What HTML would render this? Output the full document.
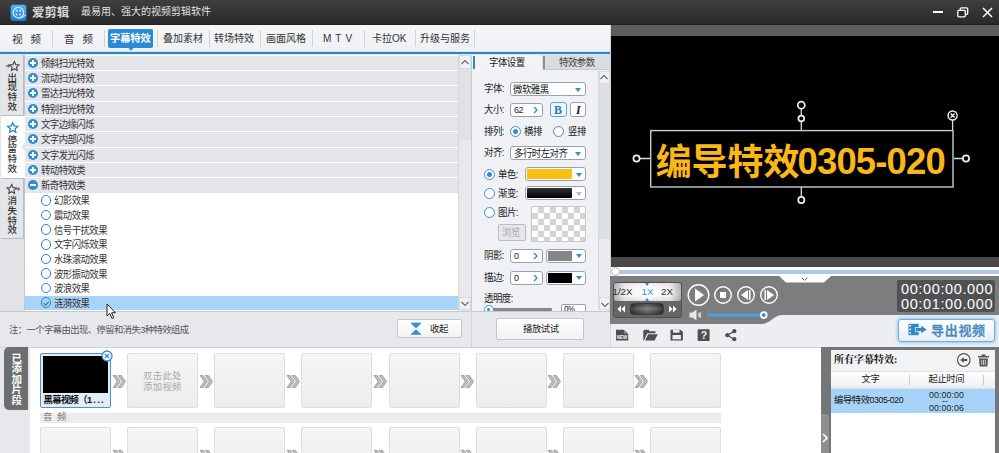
<!DOCTYPE html>
<html lang="zh-CN">
<head>
<meta charset="utf-8">
<title>爱剪辑</title>
<style>
*{box-sizing:border-box;margin:0;padding:0}
html,body{width:999px;height:453px;overflow:hidden;background:#eceef1}
body{font-family:"Liberation Sans","Noto Sans CJK SC",sans-serif;font-size:11px;color:#333;position:relative}
.a{position:absolute}
.t{position:absolute;white-space:nowrap;line-height:1}
/* title bar */
#title{left:0;top:0;width:999px;height:25px;background:linear-gradient(#3f3f3f,#333 50%,#2b2b2b 94%,#1c1c1c)}
/* menu */
#menu{left:0;top:25px;width:610px;height:27px;background:linear-gradient(#f4f6f8,#eef0f3)}
.mi{position:absolute;top:33px;font-size:10.5px;line-height:12px;color:#333;white-space:nowrap}
.sep{position:absolute;top:30px;width:1px;height:17px;background:#d0d3d7}
/* rows */
.g{position:absolute;left:25px;width:433px;height:14.33px;background:#e3e5e9}
.g span,.c span{position:absolute;left:16px;top:2px;font-size:9.4px;letter-spacing:-0.55px;line-height:11px;transform:scaleY(1.06);transform-origin:50% 50%;color:#333;white-space:nowrap}
.g i{position:absolute;left:3px;top:2px;width:10px;height:10px;border-radius:50%;background:#2e8fd0}
.g i:before{content:"";position:absolute;left:2px;top:4px;width:6px;height:2px;background:#fff}
.g i.p:after{content:"";position:absolute;left:4px;top:2px;width:2px;height:6px;background:#fff}
.c{position:absolute;left:25px;width:433px;height:14.62px}
.c span{left:29px}
.c i{position:absolute;left:15.700px;top:1.800px;width:10.600px;height:10.600px;border-radius:50%;border:1.500px solid #2f84c2;background:#fff}
/* form */
.lb{position:absolute;font-size:9.4px;letter-spacing:-0.5px;line-height:12px;transform:scaleY(1.08);transform-origin:50% 50%;color:#222;white-space:nowrap}
.in{position:absolute;background:#fff;border:1px solid #9aa3ad;border-radius:3px}
.rd{position:absolute;width:11px;height:11px;border-radius:50%;border:1px solid #3f8fc9;background:#fff}
.rd.on:after{content:"";position:absolute;left:2px;top:2px;width:5px;height:5px;border-radius:50%;background:#2e8fd0}
.dd{position:absolute;width:0;height:0;margin:0.5px 0 0 0.5px;border-left:3.5px solid transparent;border-right:3.5px solid transparent;border-top:4px solid #2e8fd0}
/* clips */
.clip{position:absolute;width:71px;height:55px;background:linear-gradient(#f5f5f5,#ededed);border:1px solid #dedede;border-radius:2px}
.arr{position:absolute;font-size:0}
</style>
</head>
<body>
<!-- TITLE -->
<div id="title" class="a"></div>
<svg class="a" style="left:10px;top:4px" width="17" height="17" viewBox="0 0 17 17">
 <defs><linearGradient id="lg" x1="0" y1="0" x2="0" y2="1"><stop offset="0" stop-color="#5db4f0"/><stop offset="1" stop-color="#1e7fd0"/></linearGradient></defs>
 <rect x="0.400" y="0.400" width="16.200" height="16.700" rx="3.300" fill="url(#lg)" stroke="#1c5f9c" stroke-width="0.800"/>
 <circle cx="8.400" cy="8.600" r="5.300" fill="none" stroke="#cfeaff" stroke-width="1.300"/>
 <circle cx="6.600" cy="6.800" r="1.050" fill="#cfeaff"/><circle cx="10.200" cy="6.800" r="1.050" fill="#cfeaff"/>
 <circle cx="6.600" cy="10.500" r="1.050" fill="#cfeaff"/><circle cx="10.200" cy="10.500" r="1.050" fill="#cfeaff"/>
 <path d="M8.400 13.900 Q13 14.200 15.800 10.500" fill="none" stroke="#cfeaff" stroke-width="1.200"/>
</svg>
<div class="t" style="left:32px;top:6.500px;font-size:12.400px;font-weight:bold;color:#d6d6d6;letter-spacing:0px">爱剪辑</div>
<div class="t" style="left:81px;top:7px;font-size:10px;color:#e0e0e0">最易用、强大的视频剪辑软件</div>
<!-- window buttons -->
<div class="a" style="left:933px;top:11px;width:10px;height:2px;background:#fff"></div>
<svg class="a" style="left:957px;top:7px" width="12" height="11" viewBox="0 0 12 11"><rect x="3.2" y="0.8" width="7.5" height="6.5" rx="1" fill="none" stroke="#fff" stroke-width="1.3"/><rect x="0.8" y="3.3" width="7.5" height="6.5" rx="1" fill="#2a2a2a" stroke="#fff" stroke-width="1.3"/></svg>
<svg class="a" style="left:982px;top:7px" width="11" height="11" viewBox="0 0 11 11"><path d="M1 1 L10 10 M10 1 L1 10" stroke="#fff" stroke-width="1.5"/></svg>

<!-- MENU -->
<div id="menu" class="a"></div>
<div class="a" style="left:0;top:51px;width:610px;height:1px;background:#cfe6f6"></div>
<div class="a" style="left:0;top:52px;width:610px;height:2px;background:#2b86c2"></div>
<div class="a" style="left:0;top:54px;width:610px;height:1px;background:#d9ebf7"></div>
<div class="a" style="left:108px;top:29px;width:45px;height:19px;background:#2a8ad8;border-radius:2px"></div>
<div class="a" style="left:128px;top:47px;width:0;height:0;border-left:3px solid transparent;border-right:3px solid transparent;border-top:4px solid #2a8ad8"></div>
<div class="mi" style="left:12px;word-spacing:0">视<span style="display:inline-block;width:8px"></span>频</div>
<div class="sep" style="left:52px"></div>
<div class="mi" style="left:64px">音<span style="display:inline-block;width:8px"></span>频</div>
<div class="sep" style="left:104px"></div>
<div class="mi" style="left:110px;color:#fff;font-weight:bold;font-size:10.2px;top:33px">字幕特效</div>
<div class="sep" style="left:157px"></div>
<div class="mi" style="left:163px;font-size:10px">叠加素材</div>
<div class="sep" style="left:209px"></div>
<div class="mi" style="left:214px;font-size:10px">转场特效</div>
<div class="sep" style="left:260px"></div>
<div class="mi" style="left:266px;font-size:10px">画面风格</div>
<div class="sep" style="left:312px"></div>
<div class="mi" style="left:323px;font-size:10px;letter-spacing:4px">MTV</div>
<div class="sep" style="left:364px"></div>
<div class="mi" style="left:372px;font-size:10px">卡拉OK</div>
<div class="sep" style="left:415px"></div>
<div class="mi" style="left:420px;font-size:10px">升级与服务</div>
<div class="sep" style="left:474px"></div>

<!-- SIDEBAR -->
<div class="a" style="left:0;top:55px;width:25px;height:256px;background:#e1e3e6;border-right:1px solid #c4c7cb"></div>
<div class="a" style="left:1px;top:55px;width:23px;height:61px;background:#e4e6e9;border-right:1px solid #b9bcc1;border-bottom:1px solid #b9bcc1"></div>
<div class="a" style="left:1px;top:116px;width:24px;height:62px;background:#fff"></div>
<div class="a" style="left:1px;top:178px;width:23px;height:61px;background:#e4e6e9;border-right:1px solid #b9bcc1;border-bottom:1px solid #b9bcc1;border-top:1px solid #b9bcc1"></div>
<div class="t" style="left:7.5px;top:72.500px;font-size:9.5px;line-height:9.8px;width:9.5px;white-space:normal;color:#333;font-weight:500;word-break:break-all">出现特效</div>
<div class="t" style="left:7.5px;top:134.500px;font-size:9.5px;line-height:9.8px;width:9.5px;white-space:normal;color:#333;font-weight:500;word-break:break-all">停留特效</div>
<div class="t" style="left:7.5px;top:196px;font-size:9.5px;line-height:9.8px;width:9.5px;white-space:normal;color:#333;font-weight:500;word-break:break-all">消失特效</div>
<svg class="a" style="left:5px;top:60px" width="15" height="14" viewBox="0 0 15 14"><path d="M9.300 1.500 L10.700 4.500 L14.000 4.900 L11.500 7.100 L12.200 10.400 L9.300 8.700 L6.400 10.400 L7.100 7.100 L4.600 4.900 L7.900 4.500 Z" fill="none" stroke="#444" stroke-width="1.100"/><path d="M0.800 6 H4.300 M2.800 4.500 L4.500 6 L2.800 7.500" fill="none" stroke="#444" stroke-width="1"/></svg>
<svg class="a" style="left:5px;top:121px" width="15" height="14" viewBox="0 0 15 14"><path d="M7.700 1.700 L9.200 5.000 L12.700 5.400 L10.100 7.800 L10.800 11.300 L7.700 9.500 L4.600 11.300 L5.300 7.800 L2.700 5.400 L6.200 5.000 Z" fill="none" stroke="#2a86c4" stroke-width="1.300"/></svg>
<svg class="a" style="left:5px;top:183px" width="16" height="14" viewBox="0 0 16 14"><path d="M6.700 1.500 L8.100 4.500 L11.400 4.900 L8.900 7.100 L9.600 10.400 L6.700 8.700 L3.800 10.400 L4.500 7.100 L2.000 4.900 L5.300 4.500 Z" fill="none" stroke="#444" stroke-width="1.100"/><path d="M10.900 6 H14.400 M12.900 4.500 L14.600 6 L12.900 7.500" fill="none" stroke="#444" stroke-width="1"/></svg>
<div class="a" style="left:21px;top:143px;width:0;height:0;border-top:4px solid transparent;border-bottom:4px solid transparent;border-right:4px solid #e1e3e6"></div>

<!-- LIST -->
<div class="a" style="left:25px;top:55px;width:433px;height:256px;background:#fff"></div>
<div class="g" style="top:55.5px"><i class="p"></i><span>倾斜扫光特效</span></div>
<div class="g" style="top:70.8px"><i class="p"></i><span>流动扫光特效</span></div>
<div class="g" style="top:86.2px"><i class="p"></i><span>雷达扫光特效</span></div>
<div class="g" style="top:101.5px"><i class="p"></i><span>特别扫光特效</span></div>
<div class="g" style="top:116.8px"><i class="p"></i><span>文字边缘闪烁</span></div>
<div class="g" style="top:132.2px"><i class="p"></i><span>文字内部闪烁</span></div>
<div class="g" style="top:147.5px"><i class="p"></i><span>文字发光闪烁</span></div>
<div class="g" style="top:162.8px"><i class="p"></i><span>转动特效类</span></div>
<div class="g" style="top:178.2px"><i></i><span>新奇特效类</span></div>
<div class="c" style="top:193.4px"><i></i><span>幻影效果</span></div>
<div class="c" style="top:208px"><i></i><span>震动效果</span></div>
<div class="c" style="top:222.6px"><i></i><span>信号干扰效果</span></div>
<div class="c" style="top:237.3px"><i></i><span>文字闪烁效果</span></div>
<div class="c" style="top:251.9px"><i></i><span>水珠滚动效果</span></div>
<div class="c" style="top:266.5px"><i></i><span>波形振动效果</span></div>
<div class="c" style="top:281.1px"><i></i><span>波浪效果</span></div>
<div class="c" style="top:295.7px;background:#a8d4f8"><i style="background:transparent"></i><span>涟漪效果</span></div>
<svg class="a" style="left:41px;top:297.800px" width="10.600" height="10.600" viewBox="0 0 10 10"><path d="M2.6 5 L4.4 6.8 L7.4 3.4" fill="none" stroke="#2a86c4" stroke-width="1.2"/></svg>
<!-- list scrollbar -->
<div class="a" style="left:458px;top:55px;width:13px;height:256px;background:#e7e9ec;border-left:1px solid #d5d8dc"></div>
<div class="a" style="left:459px;top:69px;width:12px;height:71px;background:#e0e2e6"></div>
<div class="a" style="left:459px;top:55px;width:12px;height:14px;background:#f0f1f3;border:1px solid #d9dcdf"></div><svg class="a" style="left:460px;top:58px" width="10" height="8" viewBox="0 0 10 8"><path d="M1.5 6 L5 2.5 L8.5 6" fill="none" stroke="#6a6a6a" stroke-width="1.100"/></svg>
<div class="a" style="left:459px;top:297px;width:12px;height:13px;background:#f0f1f3;border:1px solid #d9dcdf"></div><svg class="a" style="left:460px;top:300px" width="10" height="8" viewBox="0 0 10 8"><path d="M1.5 2 L5 5.5 L8.5 2" fill="none" stroke="#6a6a6a" stroke-width="1.100"/></svg>

<!-- cursor -->
<svg class="a" style="left:106px;top:303px;z-index:9" width="11" height="17" viewBox="0 0 11 17"><path d="M1 1 L1 13 L3.8 10.4 L6 15.5 L7.8 14.7 L5.6 9.8 L9.4 9.6 Z" fill="#fff" stroke="#222" stroke-width="1"/></svg>

<!-- SETTINGS PANEL -->
<div class="a" style="left:471px;top:55px;width:139px;height:256px;background:#eff1f4"></div>
<div class="a" style="left:472px;top:55px;width:70px;height:15px;background:#f1f3f6"></div>
<div class="a" style="left:473px;top:56px;width:2px;height:13px;background:#2b86c2"></div>
<div class="a" style="left:542px;top:55px;width:68px;height:15px;background:#d9dce0;border-bottom:1px solid #c6c9ce"></div>
<div class="a" style="left:543px;top:56px;width:2px;height:13px;background:#8c8f93"></div>
<div class="lb" style="left:489px;top:57px">字体设置</div>
<div class="lb" style="left:559px;top:57px;color:#444">特效参数</div>
<div class="a" style="left:471px;top:55px;width:1px;height:292px;background:#c9ccd1"></div>
<!-- panel scrollbar -->
<div class="a" style="left:598px;top:71px;width:12px;height:239px;background:#e9ebee;border-left:1px solid #d5d8dc"></div>
<div class="a" style="left:599px;top:84px;width:11px;height:155px;background:#dcdfe3"></div>
<div class="a" style="left:599px;top:71px;width:11px;height:13px;background:#f0f1f3;border:1px solid #d9dcdf"></div><svg class="a" style="left:599px;top:73px" width="10" height="8" viewBox="0 0 10 8"><path d="M1.5 6 L5 2.5 L8.5 6" fill="none" stroke="#6a6a6a" stroke-width="1.100"/></svg>
<div class="a" style="left:599px;top:297px;width:11px;height:13px;background:#f0f1f3;border:1px solid #d9dcdf"></div><svg class="a" style="left:599.500px;top:300.500px" width="10" height="8" viewBox="0 0 10 8"><path d="M1.5 2 L5 5.5 L8.5 2" fill="none" stroke="#6a6a6a" stroke-width="1.100"/></svg>

<div class="lb" style="left:484px;top:83px">字体:</div>
<div class="in" style="left:510px;top:82px;width:76px;height:14px"></div>
<div class="lb" style="left:513px;top:84px">微软雅黑</div>
<div class="dd" style="left:574px;top:87px"></div>

<div class="lb" style="left:484px;top:104px">大小:</div>
<div class="in" style="left:510px;top:103px;width:33px;height:14px"></div>
<div class="lb" style="left:514px;top:105px;font-size:9px;line-height:10px">62</div>
<svg class="a" style="left:532px;top:106px" width="7" height="8" viewBox="0 0 7 8"><path d="M2 1 L5 4 L2 7" fill="none" stroke="#2e8fd0" stroke-width="1.4"/></svg>
<div class="in" style="left:550px;top:102px;width:17px;height:15px;border-color:#5aa3d6;background:#eef6fc"></div>
<div class="lb" style="left:554px;top:104px;font-family:'Liberation Serif',serif;font-weight:bold;color:#2b78b4;font-size:12px">B</div>
<div class="in" style="left:570px;top:102px;width:16px;height:15px"></div>
<div class="lb" style="left:576px;top:104px;font-family:'Liberation Serif',serif;font-weight:bold;font-style:italic;color:#222;font-size:12px">I</div>

<div class="lb" style="left:484px;top:126px">排列:</div>
<div class="rd on" style="left:510px;top:126px"></div>
<div class="lb" style="left:524px;top:126px">横排</div>
<div class="rd" style="left:553px;top:126px"></div>
<div class="lb" style="left:568px;top:126px">竖排</div>

<div class="lb" style="left:484px;top:147px">对齐:</div>
<div class="in" style="left:510px;top:146px;width:76px;height:14px"></div>
<div class="lb" style="left:514px;top:148px">多行时左对齐</div>
<div class="dd" style="left:574px;top:151px"></div>

<div class="rd on" style="left:483.500px;top:168.500px"></div>
<div class="lb" style="left:498px;top:168.500px">单色:</div>
<div class="in" style="left:525px;top:167px;width:61px;height:14px"></div>
<div class="a" style="left:527px;top:169px;width:45px;height:10px;background:#fbbf13"></div>
<div class="dd" style="left:575px;top:172px"></div>

<div class="rd" style="left:483.500px;top:187.500px"></div>
<div class="lb" style="left:498px;top:187.500px">渐变:</div>
<div class="in" style="left:525px;top:186px;width:61px;height:14px"></div>
<div class="a" style="left:527px;top:188px;width:45px;height:10px;background:linear-gradient(#333,#000);border-radius:1px"></div>
<div class="dd" style="left:575px;top:191px;border-top-color:#b5b9be"></div>

<div class="rd" style="left:484px;top:207px"></div>
<div class="lb" style="left:498px;top:207px">图片:</div>
<div class="a" style="left:531px;top:206px;width:55px;height:36px;border:1px solid #c3c7cc;border-radius:2px;background:conic-gradient(#d4d4d4 25%,#fff 0 50%,#d4d4d4 0 75%,#fff 0) 0 0/12px 12px"></div>
<div class="a" style="left:498px;top:224px;width:28px;height:17px;border:1px solid #b9bcc1;border-radius:2px;background:#e6e8eb"></div>
<div class="lb" style="left:502px;top:227px;color:#a5a8ad">浏览</div>

<div class="lb" style="left:484px;top:249.800px">阴影:</div>
<div class="in" style="left:510px;top:248.800px;width:33px;height:14px"></div>
<div class="lb" style="left:514px;top:250.800px;font-size:9px;line-height:10px">0</div>
<svg class="a" style="left:532px;top:251.800px" width="7" height="8" viewBox="0 0 7 8"><path d="M2 1 L5 4 L2 7" fill="none" stroke="#2e8fd0" stroke-width="1.4"/></svg>
<div class="in" style="left:546px;top:248.800px;width:40px;height:14px"></div>
<div class="a" style="left:548px;top:250.800px;width:24px;height:10px;background:#858585"></div>
<div class="dd" style="left:575px;top:253.800px"></div>

<div class="lb" style="left:484px;top:271.500px">描边:</div>
<div class="in" style="left:510px;top:270.500px;width:33px;height:14px"></div>
<div class="lb" style="left:514px;top:272.500px;font-size:9px;line-height:10px">0</div>
<svg class="a" style="left:532px;top:273.500px" width="7" height="8" viewBox="0 0 7 8"><path d="M2 1 L5 4 L2 7" fill="none" stroke="#2e8fd0" stroke-width="1.4"/></svg>
<div class="in" style="left:546px;top:270.500px;width:40px;height:14px"></div>
<div class="a" style="left:548px;top:272.500px;width:24px;height:10px;background:#000"></div>
<div class="dd" style="left:575px;top:275.500px"></div>

<div class="lb" style="left:484px;top:292.800px">透明度:</div>
<div class="a" style="left:486px;top:308.200px;width:66px;height:2.600px;border-radius:1px;background:#858789"></div>
<div class="a" style="left:484px;top:305px;width:9.500px;height:9.500px;border-radius:50%;border:1px solid #3f8fc9;background:#fff"></div><div class="a" style="left:487.200px;top:308.200px;width:3.100px;height:3.100px;border-radius:50%;background:#2e8fd0"></div>
<div class="in" style="left:561px;top:304px;width:25px;height:9px;border-radius:2px 2px 0 0;border-bottom:0"></div>
<div class="lb" style="left:564px;top:305.500px;font-size:8px;line-height:8px;height:5px;overflow:hidden">0%</div>

<!-- NOTE STRIP -->
<div class="a" style="left:0;top:310.500px;width:610px;height:36.500px;background:#e6e8eb;border-top:1px solid #c5c8cd"></div>
<div class="a" style="left:471px;top:310px;width:1px;height:37px;background:#cfd2d6"></div>
<div class="t" style="left:9px;top:325.500px;font-size:9.300px;letter-spacing:-0.55px;color:#555">注：一个字幕由出现、停留和消失3种特效组成</div>
<div class="a" style="left:397px;top:319px;width:65px;height:19px;border:1px solid #c2c6cb;border-radius:2px;background:linear-gradient(#ffffff,#f1f2f4)"></div>
<svg class="a" style="left:410px;top:322px" width="12" height="14" viewBox="0 0 12 14"><path d="M0.300 0.700 H11.700 L6 6.200 Z M0.300 12.800 H11.700 L6 7.300 Z" fill="#2e8fd6"/></svg>
<div class="t" style="left:430px;top:324px;font-size:9.400px;letter-spacing:-0.3px;color:#222">收起</div>
<div class="a" style="left:496px;top:318px;width:88px;height:22px;border:1px solid #c2c6cb;border-radius:2px;background:linear-gradient(#ffffff,#f1f2f4)"></div>
<div class="t" style="left:523px;top:324px;font-size:9.400px;letter-spacing:-0.45px;color:#222">播放试试</div>

<!-- PREVIEW -->
<div class="a" style="left:610px;top:25px;width:389px;height:11px;background:#5d5d5d"></div>
<div class="a" style="left:610px;top:36px;width:389px;height:221px;background:#000"></div>
<div class="a" style="left:610px;top:257px;width:389px;height:10px;background:#484848"></div>
<div class="a" style="left:610px;top:25px;width:1px;height:322px;background:#d5d7da"></div>
<!-- text box -->
<div class="t" id="bc" style="left:655.700px;top:142.800px;font-size:36px;line-height:40px;font-weight:bold;color:#f9b718;letter-spacing:-0.1px">编导特效</div><div class="t" id="bl" style="left:797.500px;top:142.400px;font-size:36.500px;line-height:40px;font-weight:bold;color:#f9b718;letter-spacing:-0.85px">0305-020</div>
<svg class="a" style="left:630px;top:98px" width="345" height="110" viewBox="0 0 345 110">
 <rect x="20.700" y="32.600" width="302.300" height="56.400" fill="none" stroke="#c3ccd3" stroke-width="1.400"/>
 <g fill="none" stroke="#f0f0f0" stroke-width="1.700">
  <path d="M171.300 11 V32 M9.500 60.500 H20 M324 60.500 H333 M171.300 89 V99 M322.600 22 V32" stroke="#d4dade" stroke-width="1.300"/>
  <circle cx="171.300" cy="7.200" r="3.500" fill="#000"/><circle cx="171.300" cy="20.500" r="2.900" fill="#000"/>
  <circle cx="6.500" cy="60.500" r="3.100" fill="#000"/><circle cx="336" cy="60.500" r="3.100" fill="#000"/>
  <circle cx="171.300" cy="102" r="3.100" fill="#000"/>
  <circle cx="322.600" cy="17.500" r="4.500" fill="#000" stroke-width="1.500"/>
  <path d="M320.600 15.500 L324.600 19.500 M324.600 15.500 L320.600 19.500" stroke-width="1.500"/>
 </g>
</svg>

<!-- progress -->
<div class="a" style="left:611px;top:267px;width:388px;height:9px;background:#fff"></div>
<div class="a" style="left:618px;top:270px;width:381px;height:4px;background:#b4c6e4"></div>
<div class="a" style="left:611px;top:267px;width:9px;height:9px;border-radius:50%;background:#fff;border:1px solid #bbb"></div>
<!-- control panel -->
<svg class="a" style="left:610px;top:276px" width="389" height="50" viewBox="-1 0 389 50">
 <path d="M-1 0 H388 V39 H172 C162 39 160 48 150 48 H-1 Z" fill="#7b7d7f"/>
 <path d="M168 0 H220 L213 6.5 H175 Z" fill="#fff"/>
 <path d="M190.500 1.5 L193.500 4.500 L196.500 1.5" fill="none" stroke="#666" stroke-width="1"/>
</svg>
<!-- speed box -->
<div class="a" style="left:613px;top:282px;width:68.500px;height:35.500px;border-radius:3px;background:#646668;border:1px solid #4e5052"></div>
<div class="a" style="left:614px;top:283px;width:66.500px;height:18px;border-radius:2px;background:linear-gradient(rgba(0,0,0,0.06),rgba(255,255,255,0) 35%,rgba(255,255,255,0) 70%,rgba(0,0,0,0.1)),linear-gradient(90deg,#b4b4b4,#f2f2f2 16%,#fff 50%,#f2f2f2 84%,#b4b4b4)"></div>
<div class="t" style="left:612.500px;top:286.700px;font-size:9.700px;color:#2c2c2c">1/2X</div>
<div class="t" style="left:641.500px;top:286.700px;font-size:9.700px;color:#3a8fd0">1X</div>
<div class="t" style="left:661px;top:286.700px;font-size:9.700px;color:#2c2c2c">2X</div>
<div class="a" style="left:644.500px;top:282.500px;width:0;height:0;border-left:2.500px solid transparent;border-right:2.500px solid transparent;border-top:3px solid #3a8cc8"></div>
<div class="a" style="left:644.500px;top:298.300px;width:0;height:0;border-left:2.500px solid transparent;border-right:2.500px solid transparent;border-bottom:3px solid #3a8cc8"></div>
<div class="a" style="left:629.500px;top:303px;width:34.500px;height:12px;border-radius:3.500px;border:1px solid #3a3a3a;background:linear-gradient(rgba(0,0,0,0.35),rgba(255,255,255,0.08) 45%,rgba(0,0,0,0.3)),linear-gradient(90deg,#303030,#55585a 20%,#76797b 50%,#55585a 80%,#303030)"></div>
<svg class="a" style="left:617px;top:305px" width="60" height="8" viewBox="0 0 60 8"><path d="M4 0.5 V7.500 L0.5 4 Z M8 0.5 V7.500 L4.500 4 Z M52 0.5 V7.500 L55.500 4 Z M56 0.5 V7.500 L59.500 4 Z" fill="#fff"/></svg>
<!-- transport -->
<svg class="a" style="left:685px;top:282px" width="100" height="42" viewBox="0 0 100 42">
 <g fill="none" stroke="#fff" stroke-width="1.4">
  <circle cx="13.500" cy="13" r="10.300"/><circle cx="38" cy="13" r="8.300"/><circle cx="61" cy="13" r="8.300"/><circle cx="84" cy="13" r="8.300"/>
 </g>
 <path d="M10 6.5 V19.500 L19 13 Z" fill="#fff"/>
 <rect x="35" y="10" width="6" height="6" fill="#fff"/>
 <path d="M63 8 V18 L56 13 Z" fill="#fff"/><rect x="64" y="8" width="1.500" height="10" fill="#fff"/>
 <path d="M82 8 V18 L89 13 Z" fill="#fff"/><rect x="79.500" y="8" width="1.500" height="10" fill="#fff"/>
 <path d="M4.500 30.500 H7.500 L11.500 27.500 V38.500 L7.500 35.500 H4.500 Z" fill="#e8e8e8"/>
 <path d="M13.300 31 L16 30 V36 L13.300 35 Z" fill="#d0d0d0"/>
 <rect x="22" y="31.700" width="57" height="2.800" rx="1.200" fill="#4aa2e8"/>
 <circle cx="78.800" cy="33.100" r="3.800" fill="#fff"/><circle cx="78.800" cy="33.100" r="1.900" fill="#2e8fd0"/>
</svg>
<!-- time -->
<div class="a" style="left:897px;top:280px;width:98px;height:32px;background:#4f5153;border-radius:2px"></div>
<div class="t" style="left:901px;top:282px;font-size:14.5px;line-height:15px;color:#fff;letter-spacing:0.62px">00:00:00.000</div>
<div class="t" style="left:901px;top:296.5px;font-size:14.5px;line-height:15px;color:#fff;letter-spacing:0.62px">00:01:00.000</div>
<!-- toolbar icons -->
<svg class="a" style="left:614px;top:327px" width="130" height="18" viewBox="0 0 130 18">
 <g fill="#4f4f4f">
  <path d="M2 2.700 H9.500 L14.200 7 V13.500 H2 Z"/><path d="M10 2.700 L14.200 6.600 H10 Z" fill="#8a8a8a"/>
  <path d="M30.300 2.700 H34.500 L35.800 4.300 H41.500 V6.300 H33.300 L30 13.300 H29.300 V3.700 Z M34.200 7.300 H43.800 L40.600 13.500 H31 Z"/>
  <path d="M56.500 2.700 H66.500 L68.900 5 V13.500 H56.500 Z"/><rect x="59" y="2.700" width="6.500" height="3" fill="#ececee"/><rect x="58.500" y="8" width="8.400" height="4.300" fill="#ececee"/>
  <rect x="83.600" y="2.300" width="12" height="11.700" rx="0.800"/>
  <circle cx="113.300" cy="8.200" r="2.100"/><circle cx="120.300" cy="4.200" r="2.100"/><circle cx="120.300" cy="12.200" r="2.100"/>
 </g>
 <path d="M113.300 8.200 L120.300 4.200 M113.300 8.200 L120.300 12.200" stroke="#4f4f4f" stroke-width="1.300"/>
 <text x="86.700" y="12.300" font-family="Liberation Sans, sans-serif" font-size="10.500" font-weight="bold" fill="#f2f2f2">?</text>
 <text x="2.700" y="12.200" font-family="Liberation Sans, sans-serif" font-size="5" font-weight="bold" fill="#f4f4f4" textLength="10.800" lengthAdjust="spacingAndGlyphs">NEW</text>
</svg>
<!-- export button -->
<div class="a" style="left:898px;top:319px;width:97px;height:23px;border:1.500px solid #6aaee2;border-radius:3px;background:linear-gradient(#ffffff,#e9edf1);box-shadow:0 0 3px 1px #93c8f0"></div>
<svg class="a" style="left:908px;top:323.200px" width="19.500" height="13" viewBox="0 0 21 16" preserveAspectRatio="none"><rect x="0.500" y="1" width="11" height="14" fill="#2f8bc8"/><g fill="#fff"><rect x="1.500" y="2.500" width="1.800" height="1.800"/><rect x="1.500" y="7" width="1.800" height="1.800"/><rect x="1.500" y="11.500" width="1.800" height="1.800"/></g><path d="M8 5.500 H14 V2.500 L20.500 8 L14 13.500 V10.500 H8 Z" fill="#2f8bc8" stroke="#fff" stroke-width="0.800"/></svg>
<div class="t" style="left:931px;top:324px;font-size:13px;font-weight:500;-webkit-text-stroke:0.35px #4489c0;color:#4489c0;letter-spacing:0.7px">导出视频</div>

<!-- BOTTOM TIMELINE -->
<div class="a" style="left:0;top:347px;width:822px;height:106px;background:#fff;border-top:1px solid #cfd2d6"></div>
<div class="a" style="left:0;top:348px;width:30px;height:105px;background:#e6e8eb"></div>
<div class="a" style="left:4px;top:347px;width:24px;height:63px;background:#6c6e70;border-radius:5px 0 0 5px"></div>
<div class="t" style="left:11.500px;top:353px;font-size:10.500px;line-height:10.400px;width:10.500px;white-space:normal;color:#fff;font-weight:bold">已添加片段</div>

<div class="a" style="left:40px;top:352.500px;width:70.500px;height:55px;border:1px solid #4a95cf;border-radius:2px;background:#e4ecf5"></div>
<div class="a" style="left:42.500px;top:356px;width:65px;height:36.500px;background:#000"></div>
<div class="t" style="left:43.500px;top:395.500px;font-size:9.300px;color:#111;font-weight:bold;letter-spacing:-0.6px">黑幕视频（<span style="letter-spacing:1.2px">1...</span></div>
<svg class="a" style="left:101px;top:350px" width="12" height="12" viewBox="0 0 12 12"><circle cx="6" cy="6" r="5" fill="#fff" stroke="#2e8fd0" stroke-width="1.300"/><path d="M4 4 L8 8 M8 4 L4 8" stroke="#2e8fd0" stroke-width="1.300"/></svg>

<div class="clip" style="left:127px;top:353px"></div>
<div class="t" style="left:143px;top:371px;font-size:9.300px;line-height:10.500px;color:#a9a9a9;letter-spacing:0.4px;white-space:pre">双击此处
添加视频</div>
<div class="clip" style="left:214px;top:353px"></div>
<div class="clip" style="left:301px;top:353px"></div>
<div class="clip" style="left:389px;top:353px"></div>
<div class="clip" style="left:476px;top:353px"></div>
<div class="clip" style="left:563px;top:353px"></div>
<div class="clip" style="left:650px;top:353px"></div>

<div class="a" style="left:40px;top:412.500px;width:681px;height:10.500px;background:#ececec"></div>
<div class="t" style="left:43px;top:413px;font-size:9.300px;color:#777;letter-spacing:1px">音 频</div>

<div class="clip" style="left:40px;top:426.800px"></div>
<div class="clip" style="left:127px;top:426.800px"></div>
<div class="clip" style="left:214px;top:426.800px"></div>
<div class="clip" style="left:301px;top:426.800px"></div>
<div class="clip" style="left:389px;top:426.800px"></div>
<div class="clip" style="left:476px;top:426.800px"></div>
<div class="clip" style="left:563px;top:426.800px"></div>
<div class="clip" style="left:650px;top:426.800px"></div>

<svg class="a" style="left:0;top:347px" width="822" height="106" viewBox="0 0 822 106">
 
 <g transform="translate(113 28.500)"><path d="M0 0 H3.200 L7.400 6 L3.200 12 H0 L4.200 6 Z M5.200 0 H8.400 L12.600 6 L8.400 12 H5.200 L9.400 6 Z" fill="#bdbdbd" stroke="#8f8f8f" stroke-width="0.700"/></g><g transform="translate(200 28.500)"><path d="M0 0 H3.200 L7.400 6 L3.200 12 H0 L4.200 6 Z M5.200 0 H8.400 L12.600 6 L8.400 12 H5.200 L9.400 6 Z" fill="#bdbdbd" stroke="#8f8f8f" stroke-width="0.700"/></g><g transform="translate(287 28.500)"><path d="M0 0 H3.200 L7.400 6 L3.200 12 H0 L4.200 6 Z M5.200 0 H8.400 L12.600 6 L8.400 12 H5.200 L9.400 6 Z" fill="#bdbdbd" stroke="#8f8f8f" stroke-width="0.700"/></g><g transform="translate(374 28.500)"><path d="M0 0 H3.200 L7.400 6 L3.200 12 H0 L4.200 6 Z M5.200 0 H8.400 L12.600 6 L8.400 12 H5.200 L9.400 6 Z" fill="#bdbdbd" stroke="#8f8f8f" stroke-width="0.700"/></g><g transform="translate(461 28.500)"><path d="M0 0 H3.200 L7.400 6 L3.200 12 H0 L4.200 6 Z M5.200 0 H8.400 L12.600 6 L8.400 12 H5.200 L9.400 6 Z" fill="#bdbdbd" stroke="#8f8f8f" stroke-width="0.700"/></g><g transform="translate(548 28.500)"><path d="M0 0 H3.200 L7.400 6 L3.200 12 H0 L4.200 6 Z M5.200 0 H8.400 L12.600 6 L8.400 12 H5.200 L9.400 6 Z" fill="#bdbdbd" stroke="#8f8f8f" stroke-width="0.700"/></g><g transform="translate(635 28.500)"><path d="M0 0 H3.200 L7.400 6 L3.200 12 H0 L4.200 6 Z M5.200 0 H8.400 L12.600 6 L8.400 12 H5.200 L9.400 6 Z" fill="#bdbdbd" stroke="#8f8f8f" stroke-width="0.700"/></g>
 <g transform="translate(113 103.300)"><path d="M0 0 H3.200 L7.400 6 L3.200 12 H0 L4.200 6 Z M5.200 0 H8.400 L12.600 6 L8.400 12 H5.200 L9.400 6 Z" fill="#bdbdbd" stroke="#8f8f8f" stroke-width="0.700"/></g><g transform="translate(200 103.300)"><path d="M0 0 H3.200 L7.400 6 L3.200 12 H0 L4.200 6 Z M5.200 0 H8.400 L12.600 6 L8.400 12 H5.200 L9.400 6 Z" fill="#bdbdbd" stroke="#8f8f8f" stroke-width="0.700"/></g><g transform="translate(287 103.300)"><path d="M0 0 H3.200 L7.400 6 L3.200 12 H0 L4.200 6 Z M5.200 0 H8.400 L12.600 6 L8.400 12 H5.200 L9.400 6 Z" fill="#bdbdbd" stroke="#8f8f8f" stroke-width="0.700"/></g><g transform="translate(374 103.300)"><path d="M0 0 H3.200 L7.400 6 L3.200 12 H0 L4.200 6 Z M5.200 0 H8.400 L12.600 6 L8.400 12 H5.200 L9.400 6 Z" fill="#bdbdbd" stroke="#8f8f8f" stroke-width="0.700"/></g><g transform="translate(461 103.300)"><path d="M0 0 H3.200 L7.400 6 L3.200 12 H0 L4.200 6 Z M5.200 0 H8.400 L12.600 6 L8.400 12 H5.200 L9.400 6 Z" fill="#bdbdbd" stroke="#8f8f8f" stroke-width="0.700"/></g><g transform="translate(548 103.300)"><path d="M0 0 H3.200 L7.400 6 L3.200 12 H0 L4.200 6 Z M5.200 0 H8.400 L12.600 6 L8.400 12 H5.200 L9.400 6 Z" fill="#bdbdbd" stroke="#8f8f8f" stroke-width="0.700"/></g><g transform="translate(635 103.300)"><path d="M0 0 H3.200 L7.400 6 L3.200 12 H0 L4.200 6 Z M5.200 0 H8.400 L12.600 6 L8.400 12 H5.200 L9.400 6 Z" fill="#bdbdbd" stroke="#8f8f8f" stroke-width="0.700"/></g>
</svg>

<!-- RIGHT BOTTOM PANEL -->
<div class="a" style="left:820.500px;top:347px;width:178.500px;height:106px;background:#747678"></div>
<div class="a" style="left:820.500px;top:413.500px;width:8.500px;height:40px;background:#8d8f91;border-radius:0 4px 0 0"></div>
<svg class="a" style="left:822px;top:433px" width="6" height="10" viewBox="0 0 6 10"><path d="M1 1 L5 5 L1 9" fill="none" stroke="#fff" stroke-width="1.600"/></svg>
<div class="a" style="left:831px;top:350px;width:164px;height:103px;background:#fff"></div>
<div class="a" style="left:831px;top:350px;width:164px;height:21px;background:#f2f3f5"></div>
<div class="t" style="left:834px;top:355px;font-size:10px;font-weight:bold;color:#111;font-family:'Liberation Serif','Noto Serif CJK SC',serif">所有字幕特效:</div>
<svg class="a" style="left:955px;top:351.500px" width="40" height="16" viewBox="0 0 40 16">
 <circle cx="8.800" cy="8" r="6.300" fill="none" stroke="#555" stroke-width="1.200"/><path d="M5.300 8 L8.800 5 V7 H12.300 V9 H8.800 V11 Z" fill="#555"/>
 <path d="M23 4 H34 V5.500 H23 Z M26.500 2.500 H30.500 V4 H26.500 Z M24 6.500 H33 L32.300 14.500 H24.700 Z" fill="#555"/>
 <path d="M26.700 8 V13 M28.500 8 V13 M30.300 8 V13" stroke="#fff" stroke-width="0.700"/>
</svg>
<div class="a" style="left:831px;top:370.500px;width:164px;height:18px;background:linear-gradient(#fff,#eceef1);border-top:1px solid #dfe1e4;border-bottom:1px solid #dfe1e4"></div>
<div class="a" style="left:909px;top:375px;width:1px;height:10px;background:#c8cbcf"></div>
<div class="a" style="left:983px;top:375px;width:1px;height:10px;background:#c8cbcf"></div>
<div class="t" style="left:861.500px;top:375px;font-size:9.300px;letter-spacing:-0.3px;color:#222">文字</div>
<div class="t" style="left:928.500px;top:375px;font-size:9.300px;letter-spacing:-0.4px;color:#222">起止时间</div>
<div class="a" style="left:831px;top:389px;width:164px;height:23.500px;background:#a8d3f8"></div>
<div class="t" style="left:834px;top:396px;font-size:9.300px;letter-spacing:-0.4px;color:#111">编导特效<span style="font-size:8.800px;letter-spacing:-0.45px">0305-020</span></div>
<div class="t" style="left:929px;top:390.500px;font-size:8.800px;color:#222;letter-spacing:0.1px">00:00:00</div>
<div class="t" style="left:942px;top:397px;font-size:8.800px;color:#222">--</div>
<div class="t" style="left:929px;top:404px;font-size:8.800px;color:#222;letter-spacing:0.1px">00:00:06</div>
</body>
</html>
